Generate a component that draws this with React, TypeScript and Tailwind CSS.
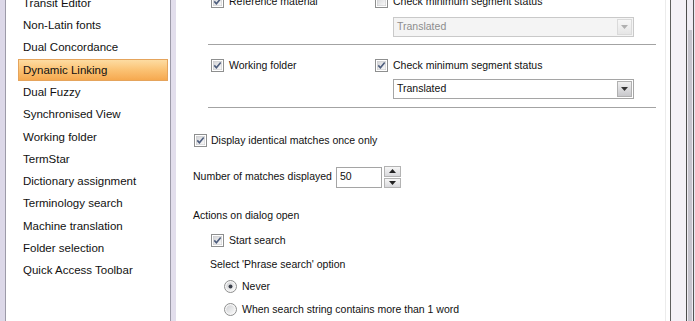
import React from "react";

function Check({ checked }: { checked?: boolean }) {
  return (
    <svg width="13" height="13" viewBox="0 0 13 13" className="shrink-0">
      <defs>
        <linearGradient id="cbg" x1="0" y1="0" x2="1" y2="1">
          <stop offset="0" stopColor="#d2d3d6" />
          <stop offset="1" stopColor="#fbfbfb" />
        </linearGradient>
      </defs>
      <rect x="0.5" y="0.5" width="12" height="12" fill="#fff" stroke="#8e8f8f" />
      <rect x="2.25" y="2.25" width="8.5" height="8.5" fill="url(#cbg)" stroke="#c4c4c6" strokeWidth="0.5" />
      {checked && (
        <path d="M3.3 6.4 L5.4 8.7 L9.7 3.6" fill="none" stroke="#4d5d7d" strokeWidth="1.6" />
      )}
    </svg>
  );
}

function Radio({ checked }: { checked?: boolean }) {
  return (
    <svg width="13" height="13" viewBox="0 0 13 13" className="shrink-0">
      <defs>
        <linearGradient id="rbg" x1="0" y1="0" x2="1" y2="1">
          <stop offset="0" stopColor="#d0d1d4" />
          <stop offset="1" stopColor="#fafafa" />
        </linearGradient>
      </defs>
      <circle cx="6.5" cy="6.5" r="6" fill="#f6f6f6" stroke="#8e8f8f" />
      <circle cx="6.5" cy="6.5" r="4.3" fill="url(#rbg)" />
      {checked && <circle cx="6.5" cy="6.5" r="2" fill="#3a3f4a" />}
    </svg>
  );
}

function Arrow({ up, color = "#222" }: { up?: boolean; color?: string }) {
  return (
    <svg width="7" height="4" viewBox="0 0 7 4">
      {up ? <path d="M0 4 L3.5 0 L7 4 Z" fill={color} /> : <path d="M0 0 L7 0 L3.5 4 Z" fill={color} />}
    </svg>
  );
}

function Dropdown({ disabled }: { disabled?: boolean }) {
  return (
    <div
      className={
        "ml-[185px] flex h-[20px] w-[241px] border " +
        (disabled ? "border-[#c9c9c9] bg-[#f4f4f4]" : "border-[#a5a5a5] bg-white")
      }
    >
      <div className={"flex flex-1 items-center pl-[3px] " + (disabled ? "text-[#8d8d8d]" : "text-[#111]")}>
        Translated
      </div>
      <div
        className={
          "m-px flex w-[15px] items-center justify-center border bg-gradient-to-b " +
          (disabled ? "border-[#dadada] from-[#f7f7f7] to-[#e6e6e6]" : "border-[#b0b0b0] from-[#f0f0f0] to-[#c8c8cc]")
        }
      >
        <Arrow color={disabled ? "#b0b0b0" : "#333"} />
      </div>
    </div>
  );
}

function Group({ leftLabel, leftChecked, rightChecked, disabled, mt }: { leftLabel: string; leftChecked?: boolean; rightChecked?: boolean; disabled?: boolean; mt: string }) {
  return (
    <div className={"ml-[15px] w-[448px] " + mt}>
      <div className="flex h-[17px] items-center pl-[3px]">
        <div className="flex w-[164px] items-center gap-[5px]">
          <Check checked={leftChecked} />
          <span>{leftLabel}</span>
        </div>
        <div className="flex items-center gap-[5px]">
          <Check checked={rightChecked} />
          <span>Check minimum segment status</span>
        </div>
      </div>
    </div>
  );
}

const items = [
  "Transit Editor",
  "Non-Latin fonts",
  "Dual Concordance",
  "Dynamic Linking",
  "Dual Fuzzy",
  "Synchronised View",
  "Working folder",
  "TermStar",
  "Dictionary assignment",
  "Terminology search",
  "Machine translation",
  "Folder selection",
  "Quick Access Toolbar",
];

export default function App() {
  return (
    <div
      className="flex h-[321px] w-[695px] overflow-hidden bg-white text-[#111]"
      style={{ fontFamily: '"Liberation Sans", Arial, sans-serif' }}
    >
      <div className="w-[5px] shrink-0 bg-[#dcd8e8]" />
      <div className="w-[166px] shrink-0 border-l border-r border-[#9c9aa8] bg-white">
        <div className="mt-[-8px] text-[11.5px]">
          {items.map((t) => {
            const sel = t === "Dynamic Linking";
            return (
              <div
                key={t}
                className={
                  "ml-[12px] mr-[2px] flex h-[22.33px] items-center border pl-[4px] " +
                  (sel
                    ? "border-[#e5a45c] bg-gradient-to-b from-[#fddca2] via-[#fbc273] to-[#f6a94f]"
                    : "border-transparent")
                }
              >
                {t}
              </div>
            );
          })}
        </div>
      </div>
      <div className="w-[5px] shrink-0 bg-[#e2deec]" />
      <div className="w-[489px] shrink-0 pl-[17px] text-[10.5px]">
        <div className="mt-[-7px] flex flex-col">
          <Group leftLabel="Reference material" leftChecked rightChecked={false} mt="" />
          <div className="mt-[7px] ml-[15px]">
            <Dropdown disabled />
          </div>
          <div className="ml-[15px] mt-[7px] h-px w-[448px] bg-[#a3a3a3]" />
          <Group leftLabel="Working folder" leftChecked rightChecked mt="mt-[12px]" />
          <div className="mt-[5px] ml-[15px]">
            <Dropdown />
          </div>
          <div className="ml-[15px] mt-[8px] h-px w-[448px] bg-[#a3a3a3]" />

          <div className="ml-px mt-[24px] flex h-[17px] items-center gap-[4px]">
            <Check checked />
            <span>Display identical matches once only</span>
          </div>

          <div className="mt-[17px] flex h-[22px] items-center">
            <span className="w-[143px]">Number of matches displayed</span>
            <div className="flex h-[21px] w-[46px] items-center border border-[#a5a5a5] bg-white pl-[3px]">50</div>
            <div className="ml-[2px] flex h-[22px] w-[17px] flex-col gap-px">
              <div className="flex flex-1 items-center justify-center border border-[#b3b3b3] bg-gradient-to-b from-[#f6f6f6] to-[#d9d9dc]">
                <Arrow up />
              </div>
              <div className="flex flex-1 items-center justify-center border border-[#b3b3b3] bg-gradient-to-b from-[#f6f6f6] to-[#d9d9dc]">
                <Arrow />
              </div>
            </div>
          </div>

          <div className="mt-[21px] flex h-[14px] items-center">Actions on dialog open</div>

          <div className="ml-[18px] mt-[9px] flex h-[17px] items-center gap-[5px]">
            <Check checked />
            <span>Start search</span>
          </div>

          <div className="ml-[17px] mt-[9px] flex h-[14px] items-center">Select 'Phrase search' option</div>

          <div className="ml-[31px] mt-[6px] flex h-[17px] items-center gap-[5px]">
            <Radio checked />
            <span>Never</span>
          </div>
          <div className="ml-[31px] mt-[6px] flex h-[17px] items-center gap-[5px]">
            <Radio />
            <span>When search string contains more than 1 word</span>
          </div>
        </div>
      </div>
      <div className="w-px shrink-0 bg-[#ececec]" />
      <div className="w-[4px] shrink-0 bg-white" />
      <div className="w-px shrink-0 bg-[#5e5e5e]" />
      <div className="w-[15px] shrink-0 bg-[#f4f1f7]" />
      <div className="w-px shrink-0 bg-[#4d4d4d]" />
      <div className="flex w-[6px] shrink-0 flex-col bg-[#efecf3]">
        <div className="h-[30px]" />
        <div className="mx-px flex-1 bg-[#c6c4cd]" />
      </div>
      <div className="w-px shrink-0 bg-[#555]" />
      <div className="w-px shrink-0 bg-[#ebe7f0]" />
    </div>
  );
}
